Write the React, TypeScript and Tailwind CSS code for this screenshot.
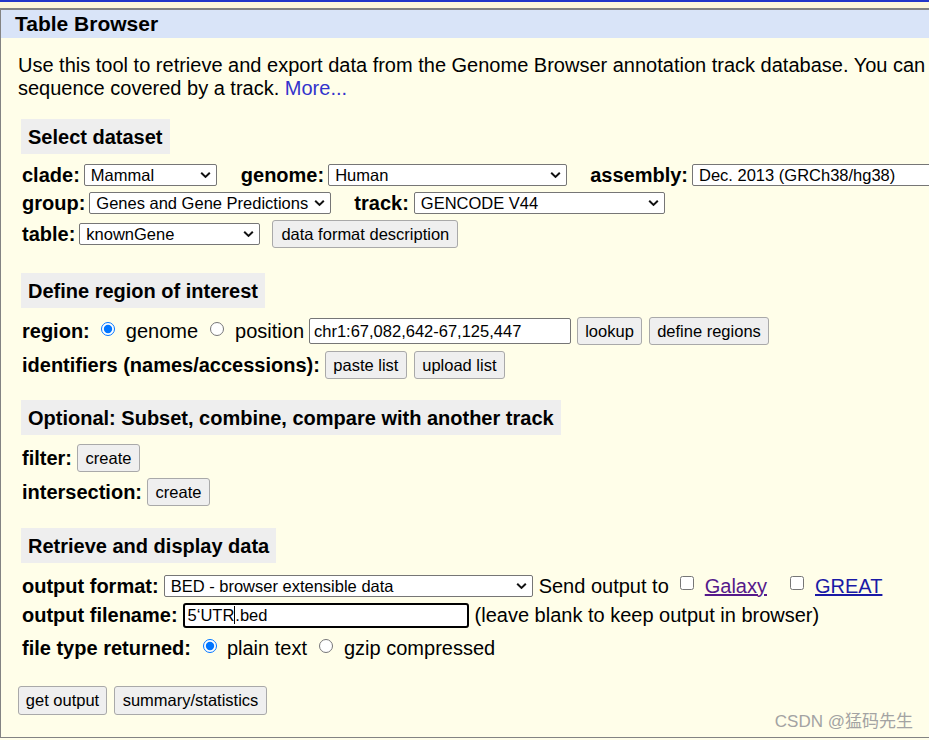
import type { ReactNode } from 'react';

function Chevron() {
  return (
    <svg
      className="pointer-events-none absolute right-[6px] top-1/2 -translate-y-1/2"
      width="11"
      height="7"
      viewBox="0 0 11 7"
      fill="none"
    >
      <path d="M1.2 1.2 L5.5 5.4 L9.8 1.2" stroke="#111" strokeWidth="2" />
    </svg>
  );
}

function Select({ value, className }: { value: string; className: string }) {
  return (
    <div className={`relative h-[22px] shrink-0 ${className}`}>
      <select
        defaultValue={value}
        className="h-full w-full appearance-none rounded-[2px] border border-[#767676] bg-white pl-[6px] pr-[18px] text-[16.5px] leading-none text-black"
      >
        <option>{value}</option>
      </select>
      <Chevron />
    </div>
  );
}

function Btn({ children, className = '' }: { children: ReactNode; className?: string }) {
  return (
    <button
      type="button"
      className={`flex h-[28px] shrink-0 items-center justify-center whitespace-nowrap rounded-[3px] border border-[#a9a9a9] bg-[#efefef] px-0 text-[16.5px] leading-none text-black ${className}`}
    >
      {children}
    </button>
  );
}

function Label({ children, className = '' }: { children: ReactNode; className?: string }) {
  return <span className={`shrink-0 text-[20px] font-bold ${className}`}>{children}</span>;
}

function SectionTitle({ children }: { children: ReactNode }) {
  return (
    <div className="-ml-px flex">
      <div className="flex h-[35px] items-center bg-[#eeeeee] px-[7px] text-[20px] font-bold">{children}</div>
    </div>
  );
}

export default function App() {
  return (
    <div className="relative h-[740px] w-[929px] overflow-hidden bg-[#fffee9] font-['Liberation_Sans',Arial,sans-serif] text-black">
      <div className="h-[2px] bg-[#2436c9]" />
      <div className="h-[6px] bg-[#fff7dc]" />

      <div className="h-[730px] w-[1100px] border-t-2 border-b border-l border-[#838383] bg-[#fffee9]">
        <header className="flex h-[28px] items-center bg-[#d9e4f8] pl-[14px] text-[21px] font-bold">
          Table Browser
        </header>

        <div className="pl-[21px]">
          <p className="-ml-[4px] mt-[16px] text-[20px] leading-[23px]">
            <span className="whitespace-nowrap">
              Use this tool to retrieve and export data from the Genome Browser annotation track database. You can
            </span>
            <br />
            sequence covered by a track. <span className="text-[#3333cc]">More...</span>
          </p>

          {/* Select dataset */}
          <div className="mt-[19px]">
            <SectionTitle>Select dataset</SectionTitle>
          </div>
          <div className="mt-[7px] flex h-[28px] items-center">
            <Label className="mr-[4px]">clade:</Label>
            <Select value="Mammal" className="w-[133px]" />
            <Label className="ml-[24px] mr-[4px]">genome:</Label>
            <Select value="Human" className="w-[239px]" />
            <Label className="ml-[23px] mr-[4px]">assembly:</Label>
            <Select value="Dec. 2013 (GRCh38/hg38)" className="w-[300px]" />
          </div>
          <div className="flex h-[28px] items-center">
            <Label className="mr-[4px]">group:</Label>
            <Select value="Genes and Gene Predictions" className="w-[242px]" />
            <Label className="ml-[23px] mr-[5px]">track:</Label>
            <Select value="GENCODE V44" className="w-[251px]" />
          </div>
          <div className="mt-[3px] flex h-[28px] items-center">
            <Label className="mr-[4px]">table:</Label>
            <Select value="knownGene" className="w-[181px]" />
            <Btn className="ml-[12px] w-[186px]">data format description</Btn>
          </div>

          {/* Define region */}
          <div className="mt-[25px]">
            <SectionTitle>Define region of interest</SectionTitle>
          </div>
          <div className="mt-[9px] flex h-[28px] items-center">
            <Label>region:</Label>
            <input type="radio" name="region" defaultChecked className="ml-[11px] h-[14px] w-[14px] -translate-y-[2px]" />
            <span className="ml-[11px] text-[20px]">genome</span>
            <input type="radio" name="region" className="ml-[12px] h-[14px] w-[14px] -translate-y-[2px]" />
            <span className="ml-[11px] text-[20px]">position</span>
            <input
              readOnly
              value="chr1:67,082,642-67,125,447"
              className="ml-[5px] h-[26px] w-[262px] rounded-[2px] border border-[#767676] bg-white pl-[4px] text-[16.5px]"
            />
            <Btn className="ml-[6px] w-[65px]">lookup</Btn>
            <Btn className="ml-[7px] w-[120px]">define regions</Btn>
          </div>
          <div className="mt-[6px] flex h-[28px] items-center">
            <Label>identifiers (names/accessions):</Label>
            <Btn className="ml-[5px] w-[82px]">paste list</Btn>
            <Btn className="ml-[7px] w-[91px]">upload list</Btn>
          </div>

          {/* Optional */}
          <div className="mt-[21px]">
            <SectionTitle>Optional: Subset, combine, compare with another track</SectionTitle>
          </div>
          <div className="mt-[9px] flex h-[28px] items-center">
            <Label>filter:</Label>
            <Btn className="ml-[5px] w-[63px]">create</Btn>
          </div>
          <div className="mt-[6px] flex h-[28px] items-center">
            <Label>intersection:</Label>
            <Btn className="ml-[5px] w-[63px]">create</Btn>
          </div>

          {/* Retrieve */}
          <div className="mt-[22px]">
            <SectionTitle>Retrieve and display data</SectionTitle>
          </div>
          <div className="mt-[11px] flex h-[24px] items-center">
            <Label className="mr-[5px]">output format:</Label>
            <Select value="BED - browser extensible data" className="w-[369px]" />
            <span className="ml-[6px] text-[20px]">Send output to</span>
            <input type="checkbox" className="ml-[11px] h-[14px] w-[14px] -translate-y-[3px]" />
            <span className="ml-[11px] text-[20px] text-[#551a8b] underline">Galaxy</span>
            <input type="checkbox" className="ml-[23px] h-[14px] w-[14px] -translate-y-[3px]" />
            <span className="ml-[11px] text-[20px] text-[#1a1aa6] underline">GREAT</span>
          </div>
          <div className="mt-[5px] flex h-[24px] items-center">
            <Label className="mr-[5px]">output filename:</Label>
            <div className="flex h-[25px] w-[286px] items-center rounded-[3px] border-2 border-black bg-white pl-[3px] text-[16.5px]">
              <span>5‘UTR</span>
              <span className="h-[18px] w-px bg-black" />
              <span>.bed</span>
            </div>
            <span className="ml-[6px] text-[20px]">(leave blank to keep output in browser)</span>
          </div>
          <div className="mt-[9px] flex h-[24px] items-center">
            <Label>file type returned:</Label>
            <input type="radio" name="ftype" defaultChecked className="ml-[12px] h-[14px] w-[14px] -translate-y-[2px]" />
            <span className="ml-[10px] text-[20px]">plain text</span>
            <input type="radio" name="ftype" className="ml-[12px] h-[14px] w-[14px] -translate-y-[2px]" />
            <span className="ml-[11px] text-[20px]">gzip compressed</span>
          </div>

          <div className="-ml-[4px] mt-[26px] flex items-center">
            <Btn className="h-[29px] w-[89px]">get output</Btn>
            <Btn className="ml-[7px] h-[29px] w-[153px]">summary/statistics</Btn>
          </div>
        </div>
      </div>

      <span className="absolute right-[16px] top-[709px] font-['Liberation_Sans','Noto_Sans_CJK_SC',sans-serif] text-[17px] text-[#a3a3a3]">
        CSDN @猛码先生
      </span>
    </div>
  );
}
